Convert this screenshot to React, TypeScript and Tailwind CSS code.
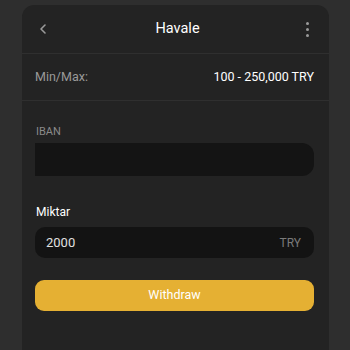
import React from "react";

export default function App() {
  return (
    <div
      className="w-[350px] h-[350px] bg-[#2e2e2e] overflow-hidden"
      style={{ fontFamily: "Roboto, 'Noto Sans', sans-serif" }}
    >
      <div className="ml-[22px] mt-[5px] w-[307px] h-[345px] bg-[#232323] rounded-t-[12px] flex flex-col">
        <div className="h-[49px] flex items-center justify-between px-[14px] border-b border-[#2f2f2f]">
          <svg width="12" height="12" viewBox="0 0 12 12" className="ml-[1px]">
            <path d="M8 2 L4 6 L8 10" stroke="#9a9a9a" strokeWidth="1.6" fill="none" strokeLinecap="round" strokeLinejoin="round" />
          </svg>
          <span className="text-[14.5px] text-white">Havale</span>
          <div className="flex flex-col gap-[3px] mr-[6px]">
            <span className="w-[3px] h-[3px] rounded-full bg-[#9a9a9a]" />
            <span className="w-[3px] h-[3px] rounded-full bg-[#9a9a9a]" />
            <span className="w-[3px] h-[3px] rounded-full bg-[#9a9a9a]" />
          </div>
        </div>
        <div className="h-[47px] flex items-center justify-between pl-[13px] pr-[15px] border-b border-[#2f2f2f]">
          <span className="text-[12.5px] text-[#9a9a9a]">Min/Max:</span>
          <span className="text-[12.5px] text-white">100 - 250,000 TRY</span>
        </div>
        <div className="pl-[13px] pr-[15px] pt-[24px] flex flex-col">
          <span className="text-[11px] text-[#8a8a8a] leading-[14px] ml-[1px]">IBAN</span>
          <div className="mt-[4px] h-[33px] bg-[#141414] rounded-r-[12px]" />
          <span className="mt-[28px] text-[12px] text-white leading-[16px] ml-[1px]">Miktar</span>
          <div className="mt-[7px] h-[31px] bg-[#131313] rounded-[10px] flex items-center justify-between pl-[11px] pr-[13px]">
            <span className="text-[13px] text-[#e0e0e0]">2000</span>
            <span className="text-[12px] text-[#7a7a7a]">TRY</span>
          </div>
          <button className="mt-[22px] h-[31px] bg-[#e5b033] rounded-[9px] flex items-center justify-center text-[12.5px] text-white">
            Withdraw
          </button>
        </div>
      </div>
    </div>
  );
}
